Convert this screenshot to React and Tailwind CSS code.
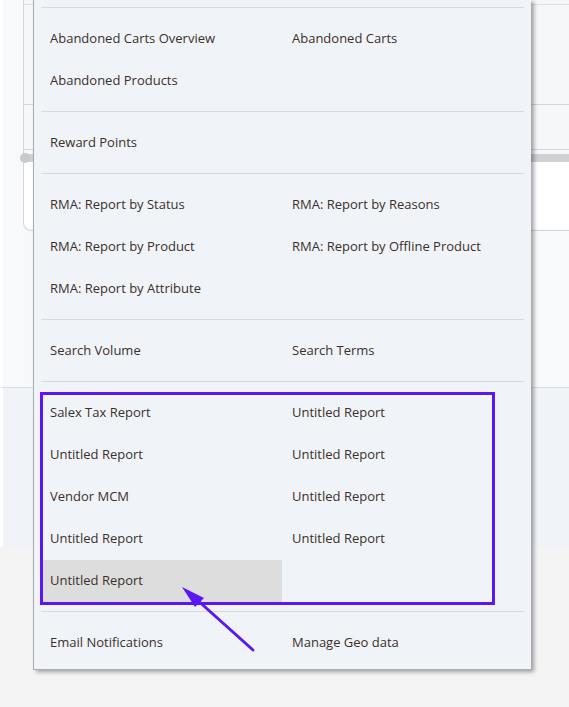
const sections = [
  [['Abandoned Carts Overview', 'Abandoned Carts'], ['Abandoned Products', '']],
  [['Reward Points', '']],
  [
    ['RMA: Report by Status', 'RMA: Report by Reasons'],
    ['RMA: Report by Product', 'RMA: Report by Offline Product'],
    ['RMA: Report by Attribute', ''],
  ],
  [['Search Volume', 'Search Terms']],
  [
    ['Salex Tax Report', 'Untitled Report'],
    ['Untitled Report', 'Untitled Report'],
    ['Vendor MCM', 'Untitled Report'],
    ['Untitled Report', 'Untitled Report'],
    ['Untitled Report', ''],
  ],
  [['Email Notifications', 'Manage Geo data']],
]

function Item({ label, active }) {
  if (!label) return <div className="h-[42px]" />
  return (
    <a
      href="#"
      className={
        'flex h-[42px] items-center px-2 text-[13px] text-[#3b302a] ' +
        (active ? 'bg-[#dddddd]' : 'hover:bg-[#e3e6ea]')
      }
    >
      {label}
    </a>
  )
}

export default function App() {
  return (
    <div
      className="relative h-[707px] w-[569px] overflow-hidden bg-[#f4f4f4]"
      style={{ fontFamily: '"Open Sans", "Noto Sans", Arial, sans-serif' }}
    >
      {/* page behind the menu */}
      <div className="h-[388px] border-b border-[#d9dce1] border-l-[3px] border-l-white bg-[#f8f9fb] pl-[20px]">
        <div className="h-[231px] rounded-bl-[8px] border-b border-l border-[#d4d6da] bg-[#f6f7f9]">
          <div className="h-[5px] border-b border-[#dcdee2]" />
          <div className="h-[100px] border-b border-[#d4d6da]" />
          <div className="h-[45px] border-b border-[#d4d6da]" />
          <div className="mt-[4px] flex h-[8px] items-center bg-[#d0d1d5]">
            <div className="-ml-[4px] h-[10px] w-[10px] rounded-full bg-[#c8c9cc]" />
          </div>
          <div className="h-[67px] rounded-bl-[8px] bg-white" />
        </div>
      </div>
      <div className="h-[159px] border-l-[3px] border-l-white bg-[#f0f3f8]" />

      {/* dropdown menu */}
      <div className="absolute left-[33px] top-0 w-[498px] border-b border-l border-[#a9abae] bg-[#f0f4f9] px-[7px] pt-[7px] shadow-[3px_2px_4px_rgba(0,0,0,0.35)]">
        {sections.map((rows, i) => (
          <div
            key={i}
            className={
              'border-t border-[#d6d9de] pt-[10px] ' +
              (i === sections.length - 1 ? 'pb-[5px]' : 'pb-[9px]')
            }
          >
            <div className="grid grid-cols-[240px_240px] gap-x-[2px] pl-[1px]">
              {rows.map((row, r) =>
                row.map((label, c) => (
                  <Item key={r + '-' + c} label={label} active={i === 4 && r === 4 && c === 0} />
                ))
              )}
            </div>
          </div>
        ))}
      </div>

      {/* annotation */}
      <div className="absolute left-[40px] top-[392px] h-[213px] w-[455px] border-[3px] border-[#5b16f5]" />
      <svg className="absolute left-0 top-0" width="569" height="707" viewBox="0 0 569 707">
        <line x1="253" y1="650" x2="195" y2="598" stroke="#5b16f5" strokeWidth="3" strokeLinecap="round" />
        <polygon points="182,587 204,598 195,607" fill="#5b16f5" />
      </svg>
    </div>
  )
}
